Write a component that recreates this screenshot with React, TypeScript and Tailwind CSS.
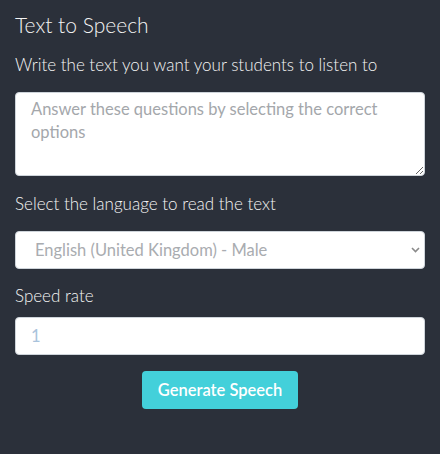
import { useState } from "react";

function App() {
  const [text, setText] = useState("");
  const [rate, setRate] = useState("");

  return (
    <div className="min-h-[454px] bg-[#2b303a] px-[15px] pt-[13px] font-['Lato',sans-serif] text-[#f4f4f4]">
      <h5 className="text-[21px] leading-[24px] font-light mb-[16px]">Text to Speech</h5>

      <label className="block text-[17px] leading-[24px] font-light mb-[15px]">
        Write the text you want your students to listen to
      </label>
      <textarea
        className="block w-full h-[84px] rounded-[4px] border border-[#ced4da] bg-white px-[15px] pt-[5px] text-[16.5px] leading-[23px] text-[#495057] placeholder:text-[#a4a7ab] outline-none"
        placeholder="Answer these questions by selecting the correct options"
        value={text}
        onChange={(e) => setText(e.target.value)}
      />

      <label className="block text-[17px] leading-[24px] font-light mt-[16px] mb-[15px]">
        Select the language to read the text
      </label>
      <div className="relative">
        <select className="block w-full h-[38px] appearance-none rounded-[4px] border border-[#ced4da] bg-white pl-[19px] pr-[30px] text-[16.5px] text-[#a9acb0] outline-none">
          <option>English (United Kingdom) - Male</option>
        </select>
        <svg
          className="pointer-events-none absolute right-[5px] top-[16px]"
          width="9"
          height="6"
          viewBox="0 0 9 6"
          fill="none"
        >
          <path d="M1 1l3.5 3.5L8 1" stroke="#8a8a8a" strokeWidth="1.6" />
        </svg>
      </div>

      <label className="block text-[17px] leading-[24px] font-light mt-[15px] mb-[9px]">Speed rate</label>
      <input
        className="block w-full h-[38px] rounded-[4px] border border-[#ced4da] bg-white px-[15px] text-[16.5px] text-[#495057] placeholder:text-[#a9c3dc] outline-none"
        placeholder="1"
        value={rate}
        onChange={(e) => setRate(e.target.value)}
      />

      <div className="flex justify-center mt-[16px]">
        <button className="h-[38px] w-[156px] rounded-[4px] bg-[#43d0da] text-[16.5px] font-semibold text-white">
          Generate Speech
        </button>
      </div>
    </div>
  );
}

export default App;
